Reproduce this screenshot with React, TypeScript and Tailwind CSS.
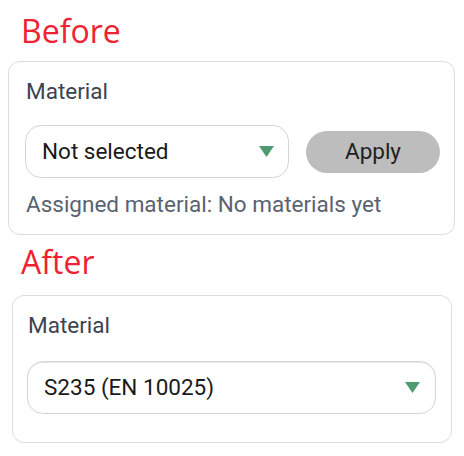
function Triangle() {
    return (
        <svg width="15" height="11" viewBox="0 0 15 11" className="shrink-0">
            <path d="M0 0 H15 L7.5 11 Z" fill="#4e9a72" />
        </svg>
    );
}

export default function App() {
    return (
        <div className="min-h-screen bg-white font-['Roboto',sans-serif]">
            <h2 className="pl-[21px] pt-[12px] text-[32px] leading-[38px] text-[#ee2230] font-['Open_Sans',sans-serif]">
                Before
            </h2>

            <section className="mt-[11px] ml-2 w-[447px] rounded-xl border border-[#dcdcdc] pt-4 pb-4 pl-4 pr-[14px]">
                <div className="pl-px text-[22.5px] leading-[26px] text-[#3c4350]">Material</div>
                <div className="mt-[21px] flex items-center gap-[17px]">
                    <div className="flex h-[53px] w-[264px] items-center justify-between rounded-2xl border border-[#d4d4dc] pl-4 pr-[14px]">
                        <span className="text-[22.5px] text-[#1a1a1a]">Not selected</span>
                        <Triangle />
                    </div>
                    <button className="h-[42px] flex-1 rounded-full bg-[#bcbdbc] text-[22.5px] text-[#1f1f1f]">
                        Apply
                    </button>
                </div>
                <p className="mt-[13px] pl-px text-[22.5px] leading-[27px] text-[#5a6270]">
                    Assigned material: No materials yet
                </p>
            </section>

            <h2 className="pl-[21px] pt-[8px] text-[32px] leading-[38px] text-[#ee2230] font-['Open_Sans',sans-serif]">
                After
            </h2>

            <section className="mt-[14px] ml-3 w-[440px] rounded-xl border border-[#dcdcdc] pt-4 pb-[28px] pl-[14px] pr-[15px]">
                <div className="pl-px text-[22.5px] leading-[26px] text-[#3c4350]">Material</div>
                <div className="mt-[23px] flex h-[53px] items-center justify-between rounded-2xl border border-[#d4d4dc] pl-4 pr-[15px] shadow-[inset_0_1px_1px_rgba(0,0,0,0.1)]">
                    <span className="text-[22.5px] text-[#1a1a1a]">S235 (EN 10025)</span>
                    <Triangle />
                </div>
            </section>
        </div>
    );
}
